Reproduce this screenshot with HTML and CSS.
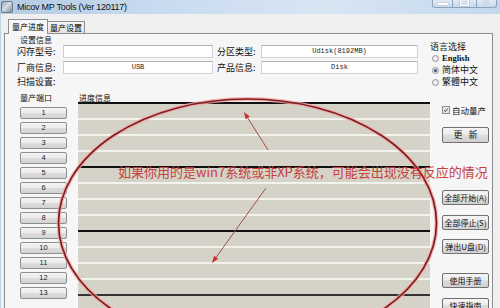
FILE: index.html
```html
<!DOCTYPE html>
<html>
<head>
<meta charset="utf-8">
<title>Micov MP Tools</title>
<link rel="stylesheet" href="styles.css">
</head>
<body>
<div class="win">
  <div class="titlebar">
    <span class="appicon"></span>
    <span class="title">Micov MP Tools (Ver 120117)</span>
    <div class="capbtns">
      <span class="cb min"><span class="dash"></span></span>
      <span class="cb max"><span class="sq"></span></span>
      <span class="cb close">✕</span>
    </div>
  </div>
  <div class="client">
    <div class="tabs">
      <span class="tab active">量产进度</span>
      <span class="tab">量产设置</span>
    </div>
    <div class="pane">
      <div class="top">
        <div class="info">
          <div class="glabel">设置信息</div>
          <div class="row"><span class="lbl">闪存型号:</span><span class="field f1"></span><span class="lbl l2">分区类型:</span><span class="field f2">Udisk(8192MB)</span></div>
          <div class="row r2"><span class="lbl">厂商信息:</span><span class="field f1">USB</span><span class="lbl l2">产品信息:</span><span class="field f2">Disk</span></div>
          <div class="row r3"><span class="lbl">扫描设置:</span></div>
        </div>
        <div class="lang">
          <div class="glabel">语言选择</div>
          <div class="radio first"><span class="dot"></span><span class="en">English</span></div>
          <div class="radio"><span class="dot on"></span>简体中文</div>
          <div class="radio"><span class="dot"></span>繁體中文</div>
        </div>
      </div>
      <div class="bottom">
        <div class="ports">
          <div class="glabel">量产端口</div>
          <div class="pgroup first">
            <div class="pbtn">1</div><div class="pbtn">2</div><div class="pbtn">3</div><div class="pbtn">4</div>
          </div>
          <div class="pgroup">
            <div class="pbtn">5</div><div class="pbtn">6</div><div class="pbtn">7</div><div class="pbtn">8</div>
          </div>
          <div class="pgroup">
            <div class="pbtn">9</div><div class="pbtn">10</div><div class="pbtn">11</div><div class="pbtn">12</div>
          </div>
          <div class="pgroup">
            <div class="pbtn">13</div>
          </div>
        </div>
        <div class="progress">
          <div class="glabel pl">进度信息</div>
          <div class="section"><div class="prow"></div><div class="prow"></div><div class="prow"></div><div class="prow"></div></div>
          <div class="section"><div class="prow"></div><div class="prow"></div><div class="prow"></div><div class="prow"></div></div>
          <div class="section"><div class="prow"></div><div class="prow"></div><div class="prow"></div><div class="prow"></div></div>
          <div class="section dark"><div class="prow"></div></div>
        </div>
        <div class="side">
          <div class="check"><span class="box"><svg width="8" height="8" viewBox="0 0 8 8"><path d="M1.5 4.2 L3.2 6 L6.6 1.8" fill="none" stroke="#2b3f63" stroke-width="1.3"/></svg></span>自动量产</div>
          <div class="btn big">更&nbsp;&nbsp;&nbsp;新</div>
          <div class="btn b1">全部开始(A)</div>
          <div class="btn b2">全部停止(S)</div>
          <div class="btn b3">弹出U盘(D)</div>
          <div class="btn b4">使用手册</div>
          <div class="btn b5">快速指南</div>
        </div>
      </div>
    </div>
  </div>
  <svg class="annot" width="500" height="308" viewBox="0 0 500 308">
    <ellipse cx="247.5" cy="223" rx="189" ry="124" fill="none" stroke="#f2a6a6" stroke-width="4" opacity="0.8"/>
    <ellipse cx="247.5" cy="223" rx="189" ry="124" fill="none" stroke="#7e1d1d" stroke-width="1.7"/>
    <line x1="268" y1="150" x2="247.7" y2="117.9" stroke="#a44c4c" stroke-width="1"/>
    <polygon points="244,112 249.8,116.6 245.6,119.2" fill="#c03030"/>
    <line x1="266" y1="188" x2="216.1" y2="257.3" stroke="#a44c4c" stroke-width="1"/>
    <polygon points="212,263 218.1,258.8 214.1,255.8" fill="#c03030"/>
  </svg>
  <div class="note">如果你用的是win7系统或非XP系统，可能会出现没有反应的情况</div>
</div>
</body>
</html>
```

FILE: styles.css
```css
* { box-sizing: border-box; margin: 0; padding: 0; }
html, body { width: 500px; height: 308px; overflow: hidden; }
body {
  font-family: "Noto Sans CJK SC", "Noto Sans", sans-serif;
  color: #000;
  background: #efefef;
}
.win {
  position: relative;
  width: 500px;
  height: 308px;
  overflow: hidden;
  background: #efefef;
}

/* title bar */
.titlebar {
  height: 14px;
  display: flex;
  align-items: flex-start;
  background: linear-gradient(to right, #b3cbe5 0%, #cadcf0 35%, #d8e6f4 65%, #c4d8ed 100%);
}
.appicon {
  width: 12px;
  height: 12px;
  margin: 1px 0 0 1px;
  border-radius: 2px;
  background: linear-gradient(135deg, #9aa7b5 0%, #d6dde5 45%, #7f8e9f 100%);
  border: 1px solid #6c7a8a;
}
.title {
  font-family: "Liberation Sans", Arial, sans-serif;
  font-size: 9px;
  letter-spacing: -0.25px;
  line-height: 14px;
  margin-left: 4px;
  color: #111;
}
.capbtns {
  margin-left: auto;
  margin-right: 3px;
  display: flex;
  height: 8px;
}
.cb {
  height: 8px;
  border: 1px solid #8ea3bb;
  border-top: none;
  background: linear-gradient(#dfe9f4, #c9d9ea);
  display: flex;
  justify-content: center;
}
.cb.min { width: 21px; border-bottom-left-radius: 3px; }
.cb.max { width: 24px; border-left: none; }
.cb.close {
  width: 20px;
  border-left: none;
  border-bottom-right-radius: 3px;
  font-family: "DejaVu Sans", sans-serif;
  font-size: 7px;
  line-height: 7px;
  color: #fff;
  text-shadow: 0 0 1px #556;
}
.dash {
  width: 10px;
  height: 2px;
  margin-top: 3px;
  background: #fff;
  box-shadow: 0 0 1px #556;
}
.sq {
  width: 9px;
  height: 6px;
  border: 1px solid #fff;
  border-top: none;
  box-shadow: 0 0 1px #556;
}

/* client */
.client {
  padding-top: 5px;
  border-left: 1px solid #c3d4e6;
}
.tabs {
  display: flex;
  align-items: flex-end;
  height: 14px;
  padding-left: 7px;
}
.tab {
  width: 38px;
  height: 12px;
  border: 1px solid #8c8e94;
  border-bottom: none;
  background: linear-gradient(#f4f4f4, #e3e3e3);
  font-size: 8px;
  line-height: 11px;
  text-align: center;
}
.tab.active {
  width: 40px;
  height: 15px;
  margin-bottom: -1px;
  background: #f7f7f7;
  position: relative;
  z-index: 1;
  line-height: 13px;
}
.tab + .tab { margin-left: -1px; }

.pane {
  margin-left: 3px;
  width: 489px;
  height: 290px;
  border: 1px solid #8c8e94;
  background: #f6f6f6;
}

/* top part */
.top {
  height: 58px;
  display: flex;
}
.info {
  width: 423px;
  padding: 2px 0 0 12px;
}
.glabel {
  font-size: 8px;
  line-height: 8px;
  height: 8px;
  margin-left: 3px;
  color: #111;
}
.info .glabel { height: 9px; }
.row {
  display: flex;
  align-items: center;
  height: 13px;
}
.row.r2 { margin-top: 3px; }
.row.r3 { margin-top: 3px; height: 10px; }
.lbl {
  width: 46px;
  font-size: 9px;
  line-height: 10px;
  white-space: nowrap;
  color: #111;
}
.lbl.l2 { width: 44px; margin-left: 4px; }
.field {
  height: 13px;
  background: #fff;
  border: 1px solid #cfd3d8;
  border-top-color: #aeb3b9;
  font-family: "Liberation Mono", monospace;
  font-size: 7px;
  line-height: 11px;
  text-align: center;
  color: #222;
}
.field.f1 { width: 150px; }
.field.f2 { width: 157px; }

.lang {
  padding: 8px 0 0 2px;
}
.lang .glabel {
  margin-left: 0;
  font-size: 9px;
  line-height: 9px;
  height: 9px;
}
.radio {
  display: flex;
  align-items: center;
  height: 12px;
  font-size: 9px;
  line-height: 10px;
  color: #111;
}
.radio.first { margin-top: 1px; }
.dot {
  width: 7px;
  height: 7px;
  border-radius: 50%;
  border: 1px solid #8f9398;
  background: radial-gradient(circle, #f4f4f4 0%, #dcdcdc 100%);
  margin: 0 3px 0 2px;
  position: relative;
}
.dot.on::after {
  content: "";
  position: absolute;
  left: 1px;
  top: 1px;
  width: 3px;
  height: 3px;
  border-radius: 50%;
  background: #34507a;
}
.en {
  font-family: "Liberation Serif", serif;
  font-weight: bold;
  font-size: 8.5px;
}

/* bottom part */
.bottom {
  display: flex;
  padding-top: 1px;
}
.ports {
  margin-left: 15px;
  width: 47px;
}
.ports .glabel { margin-left: 0; height: 9px; line-height: 9px; }
.pgroup { margin-top: 3px; }
.pgroup.first { margin-top: 5px; }
.pbtn {
  width: 47px;
  height: 12px;
  margin-bottom: 3px;
  border: 1px solid #8e8f8f;
  border-radius: 2px;
  background: linear-gradient(#f4f4f4 0%, #ececec 45%, #dedede 50%, #d2d2d2 100%);
  font-family: "Liberation Sans", Arial, sans-serif;
  font-size: 7.5px;
  line-height: 10px;
  text-align: center;
  color: #222;
}

.progress {
  margin-left: 11px;
  width: 352px;
}
.progress .glabel { height: 9px; line-height: 9px; margin-left: 1px; }
.section {
  border-top: 2px solid #111;
  background: #f3f3ee;
}
.section.dark { border-top-color: #333; }
.prow {
  height: 14px;
  background: #d5d3c8;
}
.prow + .prow { margin-top: 2px; }

.side {
  margin-left: 12px;
  width: 48px;
}
.check {
  display: flex;
  align-items: center;
  height: 10px;
  margin-top: 12px;
  font-size: 8.5px;
  line-height: 10px;
  white-space: nowrap;
  color: #111;
}
.box {
  width: 8px;
  height: 8px;
  border: 1px solid #8e8f8f;
  background: linear-gradient(#f0f0f0, #e0e0e0);
  margin-right: 2px;
  display: flex;
  align-items: center;
  justify-content: center;
}
.box svg { display: block; width: 6px; height: 6px; }
.btn {
  width: 47px;
  height: 15px;
  border: 1px solid #707070;
  border-radius: 2px;
  background: linear-gradient(#f4f4f4 0%, #ececec 45%, #dedede 50%, #d0d0d0 100%);
  font-size: 8px;
  line-height: 13px;
  text-align: center;
  white-space: nowrap;
  color: #111;
}
.btn.big { height: 16px; margin-top: 12px; font-size: 9px; line-height: 14px; }
.btn.b1 { margin-top: 47px; }
.btn.b2 { margin-top: 10px; }
.btn.b3 { margin-top: 9px; }
.btn.b4 { margin-top: 19px; }
.btn.b5 { margin-top: 10px; }

/* annotation overlay */
.annot {
  position: absolute;
  left: 0;
  top: 0;
  pointer-events: none;
}
.note {
  position: absolute;
  left: 118px;
  top: 165px;
  font-size: 13px;
  line-height: 14px;
  color: #c6403e;
  white-space: nowrap;
  font-family: "Noto Sans CJK SC", "Noto Sans", sans-serif;
}
```
